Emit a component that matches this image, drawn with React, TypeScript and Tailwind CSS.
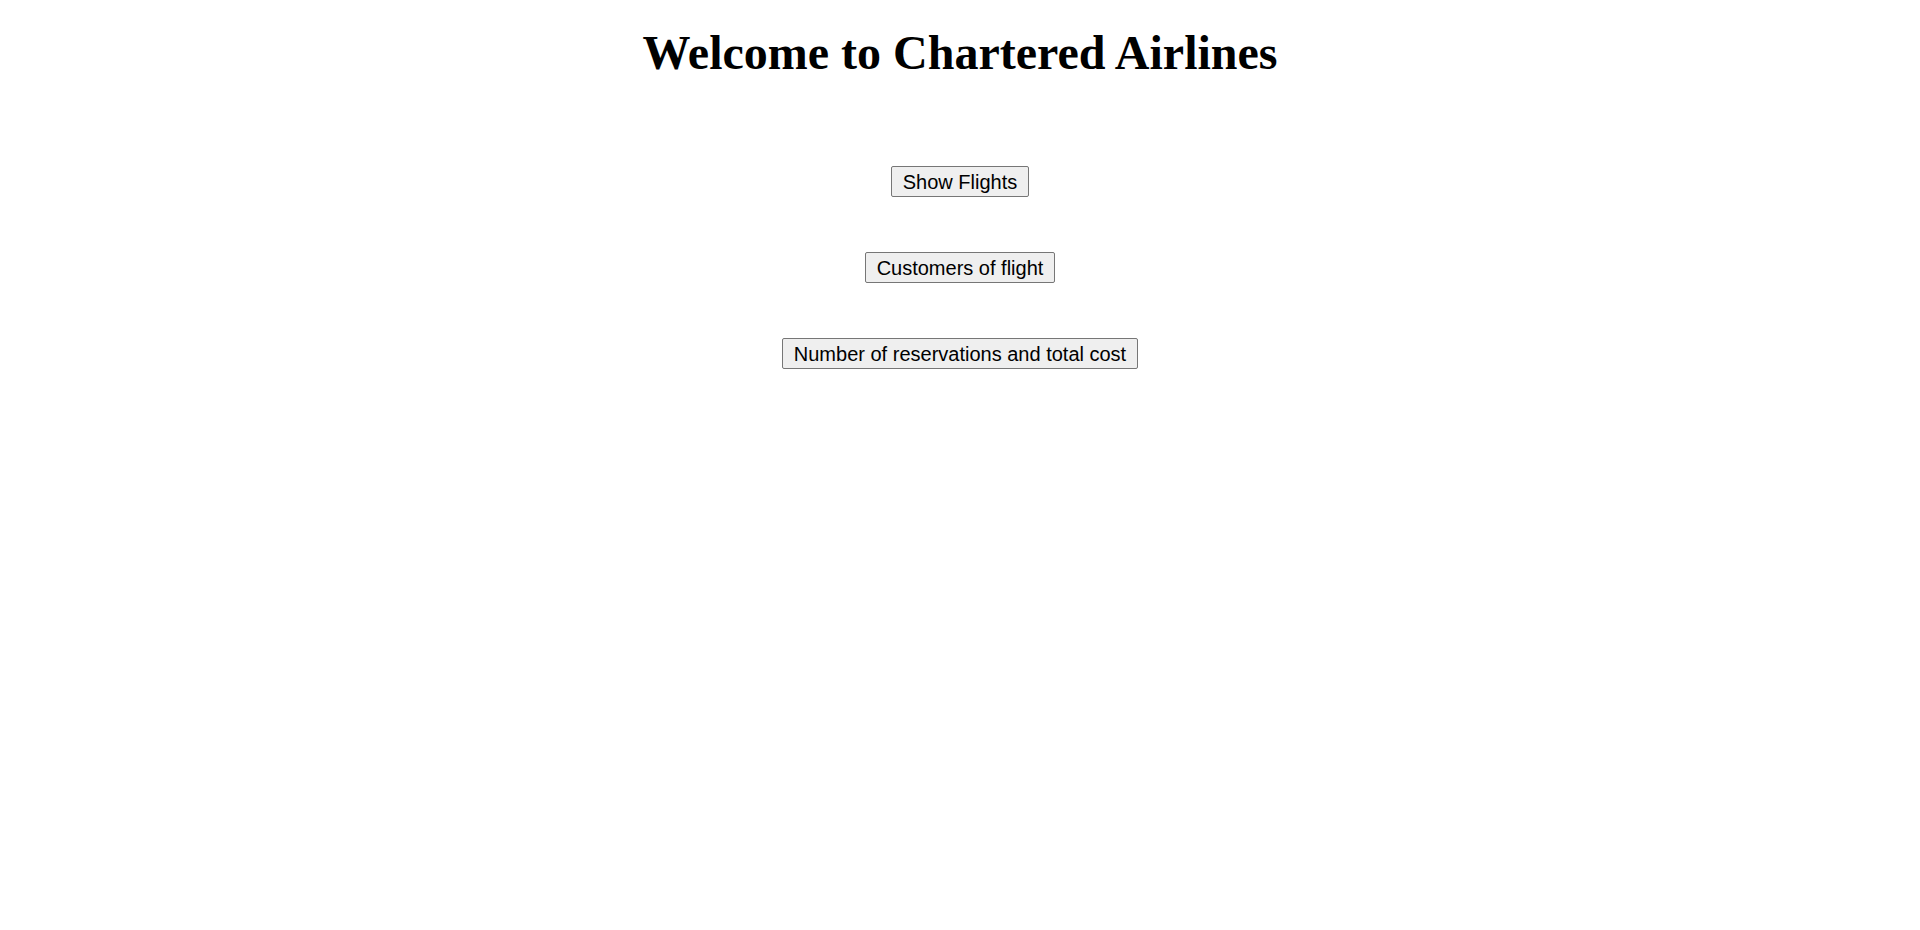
import React from 'react';

const App: React.FC = () => {
  const actions = ['Show Flights', 'Customers of flight', 'Number of reservations and total cost'];

  return (
    <div className="min-h-screen bg-white text-black">
      <h1 className="pt-[25px] text-center font-['Liberation_Serif',serif] text-[48px] font-bold leading-[55px]">
        Welcome to Chartered Airlines
      </h1>
      <div className="mt-[86px] flex flex-col items-center gap-[55px]">
        {actions.map((label) => (
          <button
            key={label}
            className="h-[31px] rounded-[2px] border border-[#767676] bg-[#efefef] px-[11px] font-['Liberation_Sans',Arial,sans-serif] text-[20px] leading-none text-black"
          >
            {label}
          </button>
        ))}
      </div>
    </div>
  );
};

export default App;
